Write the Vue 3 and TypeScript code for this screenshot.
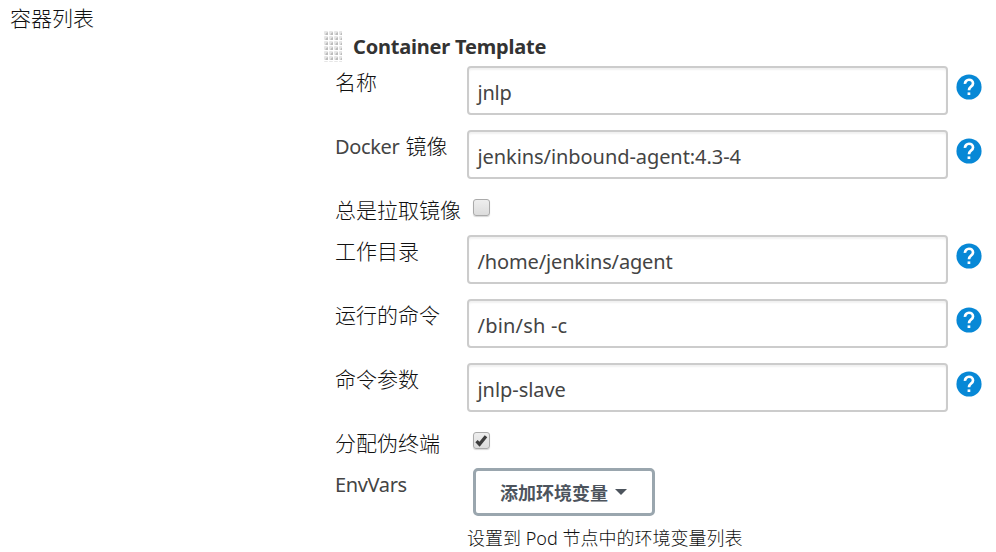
<script setup lang="ts">
import { ref } from 'vue'

interface Row {
  kind: 'text' | 'check' | 'button'
  latin?: string
  label?: string
  value?: string
  size?: string
  checked?: boolean
}

const rows = ref<Row[]>([
  { kind: 'text', label: '名称', value: 'jnlp', size: 'v-name' },
  { kind: 'text', latin: 'Docker', label: '镜像', value: 'jenkins/inbound-agent:4.3-4', size: 'v-image' },
  { kind: 'check', label: '总是拉取镜像', checked: false },
  { kind: 'text', label: '工作目录', value: '/home/jenkins/agent', size: 'v-dir' },
  { kind: 'text', label: '运行的命令', value: '/bin/sh -c', size: 'v-cmd' },
  { kind: 'text', label: '命令参数', value: 'jnlp-slave', size: 'v-args' },
  { kind: 'check', label: '分配伪终端', checked: true },
  { kind: 'button', latin: 'EnvVars' },
])
</script>

<template>
  <main class="page">
    <div class="section-label">容器列表</div>
    <section class="template">
      <header class="heading">
        <svg class="grip" width="18" height="31" viewBox="0 0 18 31">
          <defs>
            <pattern id="grip-dot" width="5" height="5" patternUnits="userSpaceOnUse">
              <rect width="4" height="4" rx="1" fill="#e6e6e6" />
              <path d="M1.5 4H4V1.2L3 1.5 1.5 3z" fill="#bcbcbc" />
            </pattern>
          </defs>
          <rect width="18" height="31" fill="url(#grip-dot)" />
        </svg>
        <h1 class="title">Container Template</h1>
      </header>

      <div v-for="(row, i) in rows" :key="i" class="row" :class="row.kind">
        <label class="label"><span v-if="row.latin" class="latin">{{ row.latin }}</span><span v-if="row.label">{{ row.label }}</span></label>
        <template v-if="row.kind === 'text'">
          <div class="field"><span :class="row.size">{{ row.value }}</span></div>
          <svg class="help" width="26" height="26" viewBox="0 0 24 24">
            <circle cx="12" cy="12" r="11.6" fill="#0788d6" />
            <path d="M8.3 9.1A3.65 3.65 0 0 1 12 5.3c2.1 0 3.7 1.5 3.7 3.5 0 2.7-3.7 3-3.7 6.1" fill="none" stroke="#fff" stroke-width="2.5" />
            <rect x="10.7" y="17" width="2.5" height="2.4" fill="#fff" />
          </svg>
        </template>
        <div v-else-if="row.kind === 'check'" class="box" role="checkbox" :aria-checked="row.checked">
          <svg v-if="row.checked" width="13" height="13" viewBox="0 0 13 13">
            <path d="M1.5 7.2l3 3L11 2.2" fill="none" stroke="#3d3d3d" stroke-width="3.3" />
          </svg>
        </div>
        <div v-else class="env">
          <button class="add" type="button"><span>添加环境变量</span><i class="caret"></i></button>
          <p class="note">设置到 <span class="pod">Pod</span> 节点中的环境变量列表</p>
        </div>
      </div>
    </section>
  </main>
</template>

<style>
body {
  background: #fff;
  overflow: hidden;
}
</style>

<style scoped>
.page {
  display: grid;
  grid-template-columns: 314px 1fr;
  box-sizing: border-box;
  width: 996px;
  height: 552px;
  padding-left: 10px;
  overflow: hidden;
  color: #111;
  font-family: "Noto Sans", "Noto Sans CJK SC", sans-serif;
  font-size: 21px;
  font-weight: 300;
}
.section-label {
  padding-top: 3px;
  line-height: 30px;
}
.template {
  padding-top: 31px;
}
.heading {
  display: flex;
  height: 35px;
}
.grip {
  flex: none;
}
.title {
  margin: 1px 0 0 11px;
  color: #333;
  font-size: 20px;
  font-weight: 700;
  letter-spacing: -0.2px;
  line-height: 30px;
  white-space: nowrap;
}
.row {
  display: grid;
  grid-template-columns: 132px 481px 35px;
  align-items: start;
  height: 64px;
  padding-left: 11px;
}
.row.check {
  height: 41px;
}
.label {
  line-height: 32px;
  white-space: nowrap;
}
.latin {
  margin-right: 6px;
  color: #444;
  font-size: 20px;
  font-weight: 400;
  letter-spacing: -0.35px;
}
.field {
  box-sizing: border-box;
  height: 49px;
  padding: 3px 0 0 8.5px;
  border: 2px solid #ccc;
  border-radius: 4px;
  box-shadow: inset 0 2px 2px rgba(0, 0, 0, 0.06);
  color: #444;
  font-size: 20px;
  font-weight: 400;
  letter-spacing: -0.2px;
  line-height: 43px;
  white-space: nowrap;
}
.v-image {
  letter-spacing: -0.07px;
}
.v-dir {
  letter-spacing: -0.14px;
}
.v-cmd {
  letter-spacing: 0.2px;
}
.v-args {
  letter-spacing: -0.05px;
}
.help {
  margin: 8px 0 0 8px;
}
.box {
  display: flex;
  align-items: center;
  justify-content: center;
  box-sizing: border-box;
  width: 17px;
  height: 17px;
  margin: 5px 0 0 6px;
  border: 1px solid #aaa;
  border-radius: 3px;
  background: linear-gradient(#eee, #dcdcdc);
  box-shadow: 0 1px 1px rgba(0, 0, 0, 0.16);
}
.add {
  display: flex;
  align-items: center;
  box-sizing: border-box;
  width: 182px;
  height: 48px;
  margin: 0 0 0 6px;
  padding: 0 0 0 24px;
  border: 3px solid #9aa6ae;
  border-radius: 5px;
  background: #fff;
  color: #4d545d;
  font-family: "Noto Sans CJK SC", sans-serif;
  font-size: 18px;
  font-weight: 700;
}
.caret {
  margin-left: 7px;
  border: 6px solid transparent;
  border-top-color: #4d545d;
  border-bottom: 0;
}
.note {
  margin: 8px 0 0;
  font-size: 18px;
  line-height: 28px;
  white-space: nowrap;
}
</style>
